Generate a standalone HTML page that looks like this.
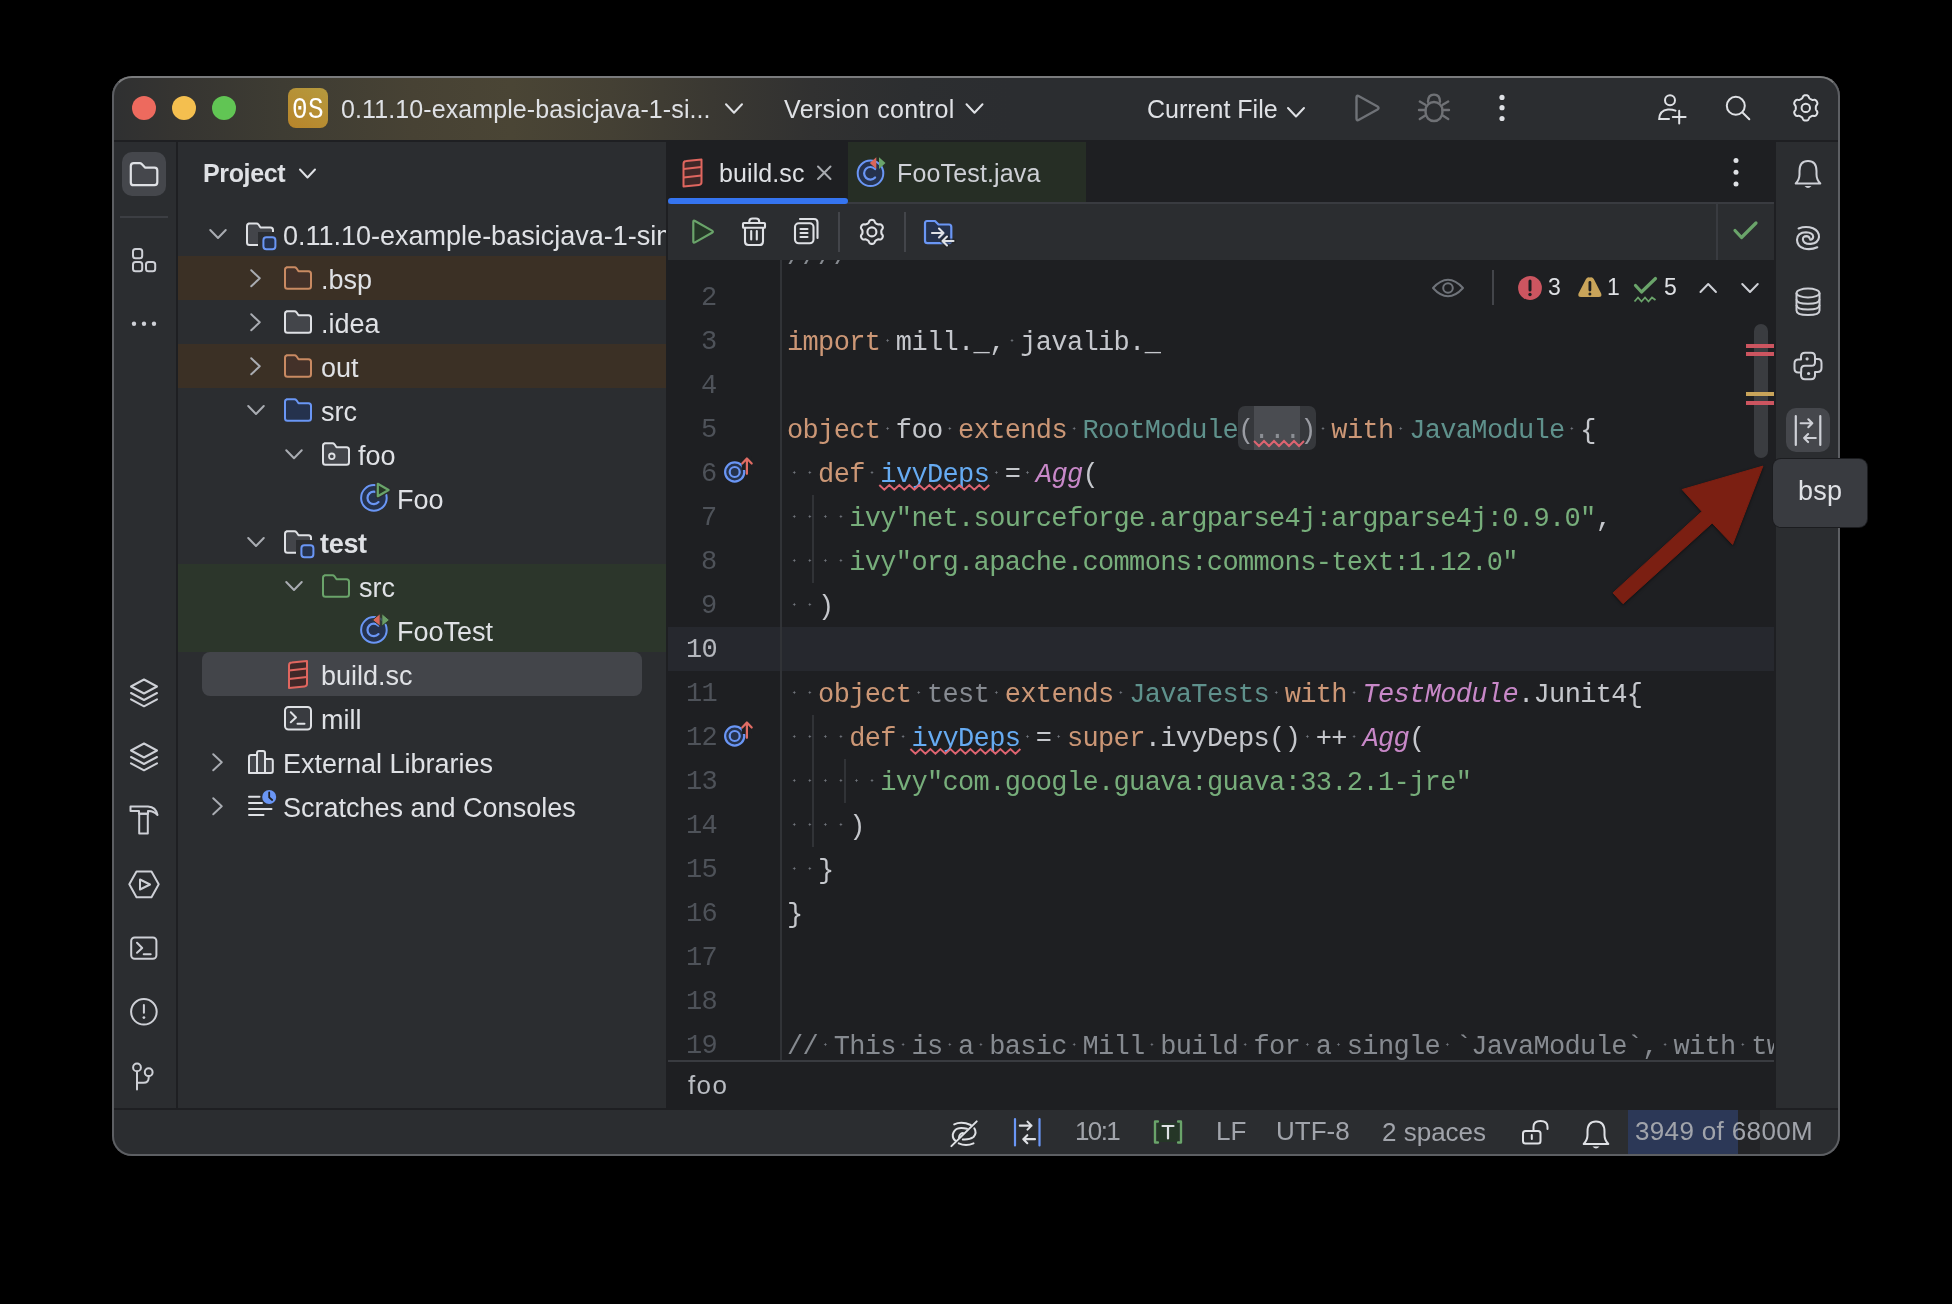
<!DOCTYPE html>
<html><head><meta charset="utf-8">
<style>
*{margin:0;padding:0;box-sizing:border-box}
html,body{width:1952px;height:1304px;background:#000;overflow:hidden}
body{position:relative;font-family:"Liberation Sans",sans-serif}
.a{position:absolute}
.t{position:absolute;white-space:pre;line-height:1;will-change:transform}
svg.ov{position:absolute;left:0;top:0;overflow:visible}
#win{position:absolute;left:112px;top:76px;width:1728px;height:1080px;border-radius:20px;background:#2b2d30;overflow:hidden}
#wb{position:absolute;left:112px;top:76px;width:1728px;height:1080px;border-radius:20px;border:2px solid #5d5f63;border-top-color:#7a7b7d;pointer-events:none}
</style></head><body>
<div id="win">
<div class="a" style="left:0;top:0;width:1728px;height:64px;background:linear-gradient(90deg,#2f3031 0px,#353431 60px,#3e3c33 170px,#474234 300px,#4a4535 400px,#444034 500px,#3a3832 600px,#313131 700px,#2c2e30 800px,#2b2d30 900px)"></div>
<div class="a" style="left:0px;top:64px;width:1728px;height:2px;background:#1e1f22"></div>
<div class="a" style="left:64px;top:66px;width:2px;height:966px;background:#1e1f22"></div>
<div class="a" style="left:554px;top:66px;width:2px;height:966px;background:#1e1f22"></div>
<div class="a" style="left:556px;top:66px;width:1106px;height:966px;background:#1e1f22"></div>
<div class="a" style="left:1662px;top:66px;width:2px;height:966px;background:#1e1f22"></div>
<div class="a" style="left:0px;top:1032px;width:1728px;height:2px;background:#1e1f22"></div>
</div>
<div class="a" style="left:288px;top:88px;width:40px;height:40px;border-radius:8px;background:linear-gradient(30deg,#b8842a,#b59a3e)"></div>
<div class="t" style="left:291.50px;top:98.24px;font-size:26px;color:#ffffff;font-family:'Liberation Mono',monospace;transform:scaleY(1.12);transform-origin:0 19.76px;letter-spacing:0.5px">0S</div>
<div class="t" style="left:341.00px;top:96.75px;font-size:25px;color:#dfe1e5;font-family:'Liberation Sans',sans-serif;letter-spacing:0.1px">0.11.10-example-basicjava-1-si...</div>
<div class="t" style="left:784.00px;top:96.75px;font-size:25px;color:#dfe1e5;font-family:'Liberation Sans',sans-serif;letter-spacing:0.35px">Version control</div>
<div class="t" style="left:1146.50px;top:96.75px;font-size:25px;color:#dfe1e5;font-family:'Liberation Sans',sans-serif">Current File</div>
<div class="a" style="left:122px;top:152px;width:44px;height:44px;background:#45474c;border-radius:10px"></div>
<div class="a" style="left:120px;top:216px;width:48px;height:2px;background:#3c3e43"></div>
<div class="t" style="left:202.50px;top:160.75px;font-size:25px;color:#dfe1e5;font-family:'Liberation Sans',sans-serif;font-weight:700;letter-spacing:-0.35px">Project</div>
<div class="a" style="left:178px;top:256px;width:488px;height:44px;background:#3b3025"></div>
<div class="a" style="left:178px;top:344px;width:488px;height:44px;background:#3b3025"></div>
<div class="a" style="left:178px;top:564px;width:488px;height:88px;background:#2c362b"></div>
<div class="a" style="left:202px;top:652px;width:440px;height:44px;background:#43454a;border-radius:8px"></div>
<div class="a" style="left:0;top:0;width:666px;height:1304px;overflow:hidden">
<div class="t" style="left:282.50px;top:222.55px;font-size:27px;color:#dfe1e5;font-family:'Liberation Sans',sans-serif">0.11.10-example-basicjava-1-simple</div>
<div class="t" style="left:320.50px;top:266.55px;font-size:27px;color:#dfe1e5;font-family:'Liberation Sans',sans-serif">.bsp</div>
<div class="t" style="left:320.50px;top:310.55px;font-size:27px;color:#dfe1e5;font-family:'Liberation Sans',sans-serif">.idea</div>
<div class="t" style="left:320.50px;top:354.55px;font-size:27px;color:#dfe1e5;font-family:'Liberation Sans',sans-serif">out</div>
<div class="t" style="left:320.50px;top:398.55px;font-size:27px;color:#dfe1e5;font-family:'Liberation Sans',sans-serif">src</div>
<div class="t" style="left:358.00px;top:442.55px;font-size:27px;color:#dfe1e5;font-family:'Liberation Sans',sans-serif">foo</div>
<div class="t" style="left:396.50px;top:486.55px;font-size:27px;color:#dfe1e5;font-family:'Liberation Sans',sans-serif">Foo</div>
<div class="t" style="left:320.00px;top:530.55px;font-size:27px;color:#dfe1e5;font-family:'Liberation Sans',sans-serif;font-weight:700;letter-spacing:-0.3px">test</div>
<div class="t" style="left:358.50px;top:574.55px;font-size:27px;color:#dfe1e5;font-family:'Liberation Sans',sans-serif">src</div>
<div class="t" style="left:396.50px;top:618.55px;font-size:27px;color:#dfe1e5;font-family:'Liberation Sans',sans-serif">FooTest</div>
<div class="t" style="left:320.50px;top:662.55px;font-size:27px;color:#dfe1e5;font-family:'Liberation Sans',sans-serif">build.sc</div>
<div class="t" style="left:320.50px;top:706.55px;font-size:27px;color:#dfe1e5;font-family:'Liberation Sans',sans-serif">mill</div>
<div class="t" style="left:282.50px;top:750.55px;font-size:27px;color:#dfe1e5;font-family:'Liberation Sans',sans-serif">External Libraries</div>
<div class="t" style="left:282.50px;top:794.55px;font-size:27px;color:#dfe1e5;font-family:'Liberation Sans',sans-serif">Scratches and Consoles</div>
</div>
<div class="a" style="left:848px;top:142px;width:238px;height:60px;background:#262e25"></div>
<div class="a" style="left:668px;top:202px;width:1106px;height:2px;background:#393b40"></div>
<div class="a" style="left:668px;top:204px;width:1106px;height:56px;background:#2b2d30"></div>
<div class="a" style="left:668px;top:198px;width:180px;height:6px;border-radius:3px;background:#3574f0"></div>
<div class="t" style="left:719.00px;top:160.55px;font-size:25px;color:#dfe1e5;font-family:'Liberation Sans',sans-serif;letter-spacing:0.1px">build.sc</div>
<div class="t" style="left:896.50px;top:160.55px;font-size:25px;color:#ced0d6;font-family:'Liberation Sans',sans-serif;letter-spacing:0.15px">FooTest.java</div>
<div class="a" style="left:838px;top:212px;width:2px;height:40px;background:#43454a"></div>
<div class="a" style="left:904px;top:212px;width:2px;height:40px;background:#43454a"></div>
<div class="a" style="left:1716px;top:204px;width:2px;height:56px;background:#393b40"></div>
<div class="a" style="left:668px;top:627px;width:1106px;height:44px;background:#26282e"></div>
<div class="a" style="left:780px;top:260px;width:2px;height:801px;background:#313337"></div>
<div class="a" style="left:812px;top:495px;width:2px;height:88px;background:#313337"></div>
<div class="a" style="left:812px;top:715px;width:2px;height:132px;background:#313337"></div>
<div class="a" style="left:844px;top:759px;width:2px;height:44px;background:#313337"></div>
<div class="a" style="left:668px;top:1060px;width:1106px;height:2px;background:#393b40"></div>
<div class="a" style="left:1238px;top:406px;width:78px;height:44px;background:#36383c;border-radius:7px"></div>
<div class="a" style="left:1254px;top:406px;width:46px;height:44px;background:#4a4c51"></div>
<div class="a" style="left:668px;top:260px;width:1106px;height:800px;overflow:hidden">
<div class="t" style="left:118.50px;top:-15.52px;font-family:'Liberation Mono',monospace;font-size:27px;letter-spacing:-0.652px"><span style="color:#868a90">////</span></div>
<div class="t" style="left:118.50px;top:69.98px;font-family:'Liberation Mono',monospace;font-size:27px;letter-spacing:-0.652px"><span style="color:#cc9776">import</span><span style="color:#c5c7cc"> mill._, javalib._</span></div>
<div class="t" style="left:118.50px;top:157.98px;font-family:'Liberation Mono',monospace;font-size:27px;letter-spacing:-0.652px"><span style="color:#cc9776">object</span><span style="color:#c5c7cc"> foo </span><span style="color:#cc9776">extends</span><span style="color:#c5c7cc"> </span><span style="color:#5f918c">RootModule</span><span style="color:#9a9ca3">(</span><span style="color:#8c8f95">...</span><span style="color:#9a9ca3">)</span><span style="color:#c5c7cc"> </span><span style="color:#cc9776">with</span><span style="color:#c5c7cc"> </span><span style="color:#5f918c">JavaModule</span><span style="color:#c5c7cc"> {</span></div>
<div class="t" style="left:118.50px;top:201.98px;font-family:'Liberation Mono',monospace;font-size:27px;letter-spacing:-0.652px"><span style="color:#c5c7cc">  </span><span style="color:#cc9776">def</span><span style="color:#c5c7cc"> </span><span style="color:#66abf2">ivyDeps</span><span style="color:#c5c7cc"> = </span><span style="color:#c888c8;font-style:italic">Agg</span><span style="color:#c5c7cc">(</span></div>
<div class="t" style="left:118.50px;top:245.98px;font-family:'Liberation Mono',monospace;font-size:27px;letter-spacing:-0.652px"><span style="color:#c5c7cc">    </span><span style="color:#77ae7b">ivy&quot;net.sourceforge.argparse4j:argparse4j:0.9.0&quot;</span><span style="color:#c5c7cc">,</span></div>
<div class="t" style="left:118.50px;top:289.98px;font-family:'Liberation Mono',monospace;font-size:27px;letter-spacing:-0.652px"><span style="color:#c5c7cc">    </span><span style="color:#77ae7b">ivy&quot;org.apache.commons:commons-text:1.12.0&quot;</span></div>
<div class="t" style="left:118.50px;top:333.98px;font-family:'Liberation Mono',monospace;font-size:27px;letter-spacing:-0.652px"><span style="color:#c5c7cc">  )</span></div>
<div class="t" style="left:118.50px;top:421.98px;font-family:'Liberation Mono',monospace;font-size:27px;letter-spacing:-0.652px"><span style="color:#c5c7cc">  </span><span style="color:#cc9776">object</span><span style="color:#c5c7cc"> </span><span style="color:#868a91">test</span><span style="color:#c5c7cc"> </span><span style="color:#cc9776">extends</span><span style="color:#c5c7cc"> </span><span style="color:#5f918c">JavaTests</span><span style="color:#c5c7cc"> </span><span style="color:#cc9776">with</span><span style="color:#c5c7cc"> </span><span style="color:#c888c8;font-style:italic">TestModule</span><span style="color:#c5c7cc">.Junit4{</span></div>
<div class="t" style="left:118.50px;top:465.98px;font-family:'Liberation Mono',monospace;font-size:27px;letter-spacing:-0.652px"><span style="color:#c5c7cc">    </span><span style="color:#cc9776">def</span><span style="color:#c5c7cc"> </span><span style="color:#66abf2">ivyDeps</span><span style="color:#c5c7cc"> = </span><span style="color:#cc9776">super</span><span style="color:#c5c7cc">.ivyDeps() ++ </span><span style="color:#c888c8;font-style:italic">Agg</span><span style="color:#c5c7cc">(</span></div>
<div class="t" style="left:118.50px;top:509.98px;font-family:'Liberation Mono',monospace;font-size:27px;letter-spacing:-0.652px"><span style="color:#c5c7cc">      </span><span style="color:#77ae7b">ivy&quot;com.google.guava:guava:33.2.1-jre&quot;</span></div>
<div class="t" style="left:118.50px;top:553.98px;font-family:'Liberation Mono',monospace;font-size:27px;letter-spacing:-0.652px"><span style="color:#c5c7cc">    )</span></div>
<div class="t" style="left:118.50px;top:597.98px;font-family:'Liberation Mono',monospace;font-size:27px;letter-spacing:-0.652px"><span style="color:#c5c7cc">  }</span></div>
<div class="t" style="left:118.50px;top:641.98px;font-family:'Liberation Mono',monospace;font-size:27px;letter-spacing:-0.652px"><span style="color:#c5c7cc">}</span></div>
<div class="t" style="left:118.50px;top:773.98px;font-family:'Liberation Mono',monospace;font-size:27px;letter-spacing:-0.652px"><span style="color:#868a90">// This is a basic Mill build for a single `JavaModule`, with two test modules</span></div>
</div>
<div class="t" style="left:701.45px;top:285.48px;font-size:27px;color:#4e5259;font-family:'Liberation Mono',monospace;letter-spacing:-0.652429999999999px">2</div>
<div class="t" style="left:701.45px;top:329.48px;font-size:27px;color:#4e5259;font-family:'Liberation Mono',monospace;letter-spacing:-0.652429999999999px">3</div>
<div class="t" style="left:701.45px;top:373.48px;font-size:27px;color:#4e5259;font-family:'Liberation Mono',monospace;letter-spacing:-0.652429999999999px">4</div>
<div class="t" style="left:701.45px;top:417.48px;font-size:27px;color:#4e5259;font-family:'Liberation Mono',monospace;letter-spacing:-0.652429999999999px">5</div>
<div class="t" style="left:701.45px;top:461.48px;font-size:27px;color:#4e5259;font-family:'Liberation Mono',monospace;letter-spacing:-0.652429999999999px">6</div>
<div class="t" style="left:701.45px;top:505.48px;font-size:27px;color:#4e5259;font-family:'Liberation Mono',monospace;letter-spacing:-0.652429999999999px">7</div>
<div class="t" style="left:701.45px;top:549.48px;font-size:27px;color:#4e5259;font-family:'Liberation Mono',monospace;letter-spacing:-0.652429999999999px">8</div>
<div class="t" style="left:701.45px;top:593.48px;font-size:27px;color:#4e5259;font-family:'Liberation Mono',monospace;letter-spacing:-0.652429999999999px">9</div>
<div class="t" style="left:685.90px;top:637.48px;font-size:27px;color:#b4b7bd;font-family:'Liberation Mono',monospace;letter-spacing:-0.652429999999999px">10</div>
<div class="t" style="left:685.90px;top:681.48px;font-size:27px;color:#4e5259;font-family:'Liberation Mono',monospace;letter-spacing:-0.652429999999999px">11</div>
<div class="t" style="left:685.90px;top:725.48px;font-size:27px;color:#4e5259;font-family:'Liberation Mono',monospace;letter-spacing:-0.652429999999999px">12</div>
<div class="t" style="left:685.90px;top:769.48px;font-size:27px;color:#4e5259;font-family:'Liberation Mono',monospace;letter-spacing:-0.652429999999999px">13</div>
<div class="t" style="left:685.90px;top:813.48px;font-size:27px;color:#4e5259;font-family:'Liberation Mono',monospace;letter-spacing:-0.652429999999999px">14</div>
<div class="t" style="left:685.90px;top:857.48px;font-size:27px;color:#4e5259;font-family:'Liberation Mono',monospace;letter-spacing:-0.652429999999999px">15</div>
<div class="t" style="left:685.90px;top:901.48px;font-size:27px;color:#4e5259;font-family:'Liberation Mono',monospace;letter-spacing:-0.652429999999999px">16</div>
<div class="t" style="left:685.90px;top:945.48px;font-size:27px;color:#4e5259;font-family:'Liberation Mono',monospace;letter-spacing:-0.652429999999999px">17</div>
<div class="t" style="left:685.90px;top:989.48px;font-size:27px;color:#4e5259;font-family:'Liberation Mono',monospace;letter-spacing:-0.652429999999999px">18</div>
<div class="t" style="left:685.90px;top:1033.48px;font-size:27px;color:#4e5259;font-family:'Liberation Mono',monospace;letter-spacing:-0.652429999999999px">19</div>
<div class="a" style="left:1492px;top:270px;width:2px;height:35px;background:#43454a"></div>
<div class="t" style="left:1548.00px;top:276.25px;font-size:23px;color:#dfe1e5;font-family:'Liberation Sans',sans-serif">3</div>
<div class="t" style="left:1607.00px;top:276.25px;font-size:23px;color:#dfe1e5;font-family:'Liberation Sans',sans-serif">1</div>
<div class="t" style="left:1664.00px;top:276.25px;font-size:23px;color:#dfe1e5;font-family:'Liberation Sans',sans-serif">5</div>
<div class="a" style="left:1754px;top:324px;width:14px;height:134px;background:#3a3c40;border-radius:7px"></div>
<div class="a" style="left:1746px;top:344px;width:28px;height:4px;background:#cc5560"></div>
<div class="a" style="left:1746px;top:352px;width:28px;height:4px;background:#cc5560"></div>
<div class="a" style="left:1746px;top:392px;width:28px;height:4px;background:#c9a45a"></div>
<div class="a" style="left:1746px;top:401px;width:28px;height:4px;background:#cc5560"></div>
<div class="t" style="left:687.50px;top:1072.10px;font-size:26px;color:#b9bcc2;font-family:'Liberation Sans',sans-serif;letter-spacing:1.4px">foo</div>
<div class="a" style="left:1786px;top:408px;width:44px;height:44px;background:#45474c;border-radius:10px"></div>
<div class="t" style="left:1075.00px;top:1118.20px;font-size:26px;color:#a1a4ab;font-family:'Liberation Sans',sans-serif;letter-spacing:-1.6px">10:1</div>
<div class="a" style="left:1157px;top:1122.5px;width:22px;height:19px;background:#253627"></div>
<div class="t" style="left:1215.50px;top:1118.20px;font-size:26px;color:#a1a4ab;font-family:'Liberation Sans',sans-serif">LF</div>
<div class="t" style="left:1275.50px;top:1118.20px;font-size:26px;color:#a1a4ab;font-family:'Liberation Sans',sans-serif">UTF-8</div>
<div class="t" style="left:1382.00px;top:1119.10px;font-size:26px;color:#a1a4ab;font-family:'Liberation Sans',sans-serif">2 spaces</div>
<div class="a" style="left:1628px;top:1110px;width:110px;height:45px;background:#2c3857"></div>
<div class="a" style="left:1738px;top:1110px;width:22px;height:45px;background:#232427"></div>
<div class="t" style="left:1634.50px;top:1118.40px;font-size:26px;color:#a1a4ab;font-family:'Liberation Sans',sans-serif;letter-spacing:0.35px">3949 of 6800M</div>
<div id="wb"></div>
<svg class="ov" width="1952" height="1304" viewBox="0 0 1952 1304"><circle cx="144" cy="108" r="12" fill="#ed6a5e"/><circle cx="184" cy="108" r="12" fill="#f4bf4f"/><circle cx="224" cy="108" r="12" fill="#61c554"/><path d="M726.0,104.25 L734,112.75 L742.0,104.25" fill="none" stroke="#dfe1e5" stroke-width="2" stroke-linecap="round" stroke-linejoin="round"/><path d="M966.5,104.25 L974.5,112.75 L982.5,104.25" fill="none" stroke="#dfe1e5" stroke-width="2" stroke-linecap="round" stroke-linejoin="round"/><path d="M1288.0,108.05 L1296,116.55 L1304.0,108.05" fill="none" stroke="#dfe1e5" stroke-width="2" stroke-linecap="round" stroke-linejoin="round"/><path d="M1356.5,97.5 Q1356.5,94.8 1359,96.2 L1377.5,106.5 Q1379.6,108 1377.5,109.5 L1359,119.8 Q1356.5,121.2 1356.5,118.5 Z" fill="none" stroke="#6f7277" stroke-width="2.4" stroke-linejoin="round"/><g fill="none" stroke="#6f7175" stroke-width="2.4" stroke-linecap="round" transform="translate(-1,0)"><path d="M1429,101.8 Q1429,94.6 1435,94.6 Q1441,94.6 1441,101.8"/><rect x="1426.6" y="102" width="16.8" height="19" rx="8.4"/><path d="M1420.8,101.5 L1426.3,104.8 M1449.2,101.5 L1443.7,104.8 M1420,110 H1426.3 M1450,110 H1443.7 M1420.8,119 L1426.3,115.6 M1449.2,119 L1443.7,115.6"/></g><circle cx="1502" cy="97.4" r="2.6" fill="#dfe1e5"/><circle cx="1502" cy="107.7" r="2.6" fill="#dfe1e5"/><circle cx="1502" cy="118.5" r="2.6" fill="#dfe1e5"/><g fill="none" stroke="#dfe1e5" stroke-width="2" stroke-linecap="round"><circle cx="1670" cy="100.2" r="5"/><path d="M1675.5,110.6 Q1672,109.3 1668,109.5 Q1659.5,110.5 1659.2,119 H1669"/><path d="M1672.8,117 H1685.6 M1679.2,110.7 V123.5"/></g><g fill="none" stroke="#dfe1e5" stroke-width="2" stroke-linecap="round"><circle cx="1735.8" cy="105.8" r="9"/><path d="M1742.5,112.5 L1749.3,119.3"/></g><path d="M1815.80,107.90 L1815.80,108.34 L1815.82,108.78 L1815.87,109.23 L1816.02,109.70 L1816.32,110.23 L1816.76,110.84 L1817.17,111.49 L1817.38,112.11 L1817.38,112.70 L1817.26,113.24 L1817.05,113.76 L1816.80,114.25 L1816.50,114.72 L1816.16,115.15 L1815.75,115.53 L1815.24,115.82 L1814.59,115.96 L1813.83,115.93 L1813.08,115.84 L1812.47,115.85 L1811.99,115.96 L1811.57,116.14 L1811.18,116.34 L1810.80,116.56 L1810.42,116.78 L1810.05,117.02 L1809.69,117.29 L1809.35,117.65 L1809.04,118.18 L1808.74,118.86 L1808.38,119.54 L1807.94,120.04 L1807.44,120.33 L1806.90,120.49 L1806.35,120.58 L1805.80,120.60 L1805.25,120.58 L1804.70,120.49 L1804.16,120.33 L1803.66,120.04 L1803.22,119.54 L1802.86,118.86 L1802.56,118.18 L1802.25,117.65 L1801.91,117.29 L1801.55,117.02 L1801.18,116.78 L1800.80,116.56 L1800.42,116.34 L1800.03,116.14 L1799.61,115.96 L1799.13,115.85 L1798.52,115.84 L1797.77,115.93 L1797.01,115.96 L1796.36,115.82 L1795.85,115.53 L1795.44,115.15 L1795.10,114.72 L1794.80,114.25 L1794.55,113.76 L1794.34,113.24 L1794.22,112.70 L1794.22,112.11 L1794.43,111.49 L1794.84,110.84 L1795.28,110.23 L1795.58,109.70 L1795.73,109.23 L1795.78,108.78 L1795.80,108.34 L1795.80,107.90 L1795.80,107.46 L1795.78,107.02 L1795.73,106.57 L1795.58,106.10 L1795.28,105.57 L1794.84,104.96 L1794.43,104.31 L1794.22,103.69 L1794.22,103.10 L1794.34,102.56 L1794.55,102.04 L1794.80,101.55 L1795.10,101.08 L1795.44,100.65 L1795.85,100.27 L1796.36,99.98 L1797.01,99.84 L1797.77,99.87 L1798.52,99.96 L1799.13,99.95 L1799.61,99.84 L1800.03,99.66 L1800.42,99.46 L1800.80,99.24 L1801.18,99.02 L1801.55,98.78 L1801.91,98.51 L1802.25,98.15 L1802.56,97.62 L1802.86,96.94 L1803.22,96.26 L1803.66,95.76 L1804.16,95.47 L1804.70,95.31 L1805.25,95.22 L1805.80,95.20 L1806.35,95.22 L1806.90,95.31 L1807.44,95.47 L1807.94,95.76 L1808.38,96.26 L1808.74,96.94 L1809.04,97.62 L1809.35,98.15 L1809.69,98.51 L1810.05,98.78 L1810.42,99.02 L1810.80,99.24 L1811.18,99.46 L1811.57,99.66 L1811.99,99.84 L1812.47,99.95 L1813.08,99.96 L1813.83,99.87 L1814.59,99.84 L1815.24,99.98 L1815.75,100.27 L1816.16,100.65 L1816.50,101.08 L1816.80,101.55 L1817.05,102.04 L1817.26,102.56 L1817.38,103.10 L1817.38,103.69 L1817.17,104.31 L1816.76,104.96 L1816.32,105.57 L1816.02,106.10 L1815.87,106.57 L1815.82,107.02 L1815.80,107.46 Z" fill="none" stroke="#dfe1e5" stroke-width="2" stroke-linejoin="round"/><circle cx="1805.8" cy="107.9" r="4.2" fill="none" stroke="#dfe1e5" stroke-width="2"/><path d="M133.8,163.2 H139.8 Q140.9,163.2 141.7,164 L145,167.6 H154.5 Q157.3,167.6 157.3,170.4 V182.3 Q157.3,185.2 154.5,185.2 H133.6 Q130.8,185.2 130.8,182.4 V166.2 Q130.8,163.2 133.8,163.2 Z" fill="none" stroke="#dfe1e5" stroke-width="2.2" stroke-linejoin="round"/><g fill="none" stroke="#ced0d6" stroke-width="2"><rect x="133" y="249" width="9.2" height="9.2" rx="2.5"/><rect x="133" y="262" width="9.2" height="9.2" rx="2.5"/><rect x="146" y="262" width="9.2" height="9.2" rx="2.5"/></g><circle cx="134" cy="323.7" r="2.2" fill="#ced0d6"/><circle cx="144" cy="323.7" r="2.2" fill="#ced0d6"/><circle cx="154" cy="323.7" r="2.2" fill="#ced0d6"/><g fill="none" stroke="#ced0d6" stroke-width="2" stroke-linejoin="round" stroke-linecap="round"><path d="M144,679.5 L157,686.5 L144,693.5 L131,686.5 Z"/><path d="M131,693.0 L144,700.0 L157,693.0"/><path d="M131,699.3 L144,706.3 L157,699.3"/></g><g fill="none" stroke="#ced0d6" stroke-width="2" stroke-linejoin="round" stroke-linecap="round"><path d="M144,743.5 L157,750.5 L144,757.5 L131,750.5 Z"/><path d="M131,757.0 L144,764.0 L157,757.0"/><path d="M131,763.3 L144,770.3 L157,763.3"/></g><g fill="none" stroke="#ced0d6" stroke-width="2" stroke-linejoin="round"><path d="M130.5,806.5 H148 Q156,807 157.5,815 Q153,810.5 148,811 V813.8 H139 V811 H130.5 Z"/><path d="M139.2,813.8 H147.8 V833.5 H139.2 Z"/></g><g fill="none" stroke="#ced0d6" stroke-width="2" stroke-linejoin="round"><path d="M129.3,884.3 L136.5,871.5 H151.5 L158.7,884.3 L151.5,897.2 H136.5 Z"/><path d="M140,879.5 L150,884.5 L140,889.5 Z"/></g><g fill="none" stroke="#ced0d6" stroke-width="2" stroke-linecap="round" stroke-linejoin="round"><rect x="131.2" y="937.5" width="25.2" height="21.2" rx="3.5" fill="none"/><path d="M137.0,942.8 L142.2,948.0 L137.0,952.8"/><path d="M143.7,954.3 H150.7"/></g><g fill="none" stroke="#ced0d6" stroke-width="2" stroke-linecap="round"><circle cx="143.9" cy="1011.8" r="12.8"/><path d="M143.9,1005 V1012.8"/></g><circle cx="143.9" cy="1017.6" r="1.4" fill="#ced0d6"/><g fill="none" stroke="#ced0d6" stroke-width="2" stroke-linecap="round"><circle cx="137" cy="1067.4" r="3.9"/><circle cx="148.7" cy="1072.2" r="3.9"/><path d="M137,1071.5 V1089.5 M137,1082.8 H143.5 Q148.7,1082.8 148.7,1077.5 V1076.2"/></g><path d="M300.0,169.5 L307.5,177.5 L315.0,169.5" fill="none" stroke="#dfe1e5" stroke-width="2" stroke-linecap="round" stroke-linejoin="round"/><path d="M210.25,230.0 L218,238.0 L225.75,230.0" fill="none" stroke="#a9acb2" stroke-width="2" stroke-linecap="round" stroke-linejoin="round"/><path d="M248.6,223.5 H256.5 Q257.7,223.5 258.5,224.5 L260.5,227.5 H270.5 Q273,227.5 273,230.0 V242.5 Q273,245.0 270.5,245.0 H249.5 Q247,245.0 247,242.5 V226.0 Q247,223.5 249.5,223.5 Z" fill="#43454a" stroke="#dfe1e5" stroke-width="2" stroke-linejoin="round"/><rect x="258" y="232" width="20" height="20" fill="#2b2d30"/><rect x="263.4" y="237.2" width="12" height="12" rx="3" fill="#25324d" stroke="#6a96f5" stroke-width="2"/><path d="M251.25,270.3 L259.75,278.3 L251.25,286.3" fill="none" stroke="#a9acb2" stroke-width="2" stroke-linecap="round" stroke-linejoin="round"/><path d="M286.6,267.3 H294.5 Q295.7,267.3 296.5,268.3 L298.5,271.3 H308.5 Q311,271.3 311,273.8 V286.3 Q311,288.8 308.5,288.8 H287.5 Q285,288.8 285,286.3 V269.8 Q285,267.3 287.5,267.3 Z" fill="#433129" stroke="#c98a62" stroke-width="2" stroke-linejoin="round"/><path d="M251.25,314.3 L259.75,322.3 L251.25,330.3" fill="none" stroke="#a9acb2" stroke-width="2" stroke-linecap="round" stroke-linejoin="round"/><path d="M286.6,311.3 H294.5 Q295.7,311.3 296.5,312.3 L298.5,315.3 H308.5 Q311,315.3 311,317.8 V330.3 Q311,332.8 308.5,332.8 H287.5 Q285,332.8 285,330.3 V313.8 Q285,311.3 287.5,311.3 Z" fill="#43454a" stroke="#dfe1e5" stroke-width="2" stroke-linejoin="round"/><path d="M251.25,358.3 L259.75,366.3 L251.25,374.3" fill="none" stroke="#a9acb2" stroke-width="2" stroke-linecap="round" stroke-linejoin="round"/><path d="M286.6,355.3 H294.5 Q295.7,355.3 296.5,356.3 L298.5,359.3 H308.5 Q311,359.3 311,361.8 V374.3 Q311,376.8 308.5,376.8 H287.5 Q285,376.8 285,374.3 V357.8 Q285,355.3 287.5,355.3 Z" fill="#433129" stroke="#c98a62" stroke-width="2" stroke-linejoin="round"/><path d="M248.25,406.0 L256,414.0 L263.75,406.0" fill="none" stroke="#a9acb2" stroke-width="2" stroke-linecap="round" stroke-linejoin="round"/><path d="M286.6,399.3 H294.5 Q295.7,399.3 296.5,400.3 L298.5,403.3 H308.5 Q311,403.3 311,405.8 V418.3 Q311,420.8 308.5,420.8 H287.5 Q285,420.8 285,418.3 V401.8 Q285,399.3 287.5,399.3 Z" fill="#25324d" stroke="#6a96f5" stroke-width="2" stroke-linejoin="round"/><path d="M286.25,450.2 L294,458.2 L301.75,450.2" fill="none" stroke="#a9acb2" stroke-width="2" stroke-linecap="round" stroke-linejoin="round"/><path d="M324.6,443.3 H332.5 Q333.7,443.3 334.5,444.3 L336.5,447.3 H346.5 Q349,447.3 349,449.8 V462.3 Q349,464.8 346.5,464.8 H325.5 Q323,464.8 323,462.3 V445.8 Q323,443.3 325.5,443.3 Z" fill="#43454a" stroke="#dfe1e5" stroke-width="2" stroke-linejoin="round"/><circle cx="331.8" cy="456.3" r="2.8" fill="none" stroke="#dfe1e5" stroke-width="1.8"/><circle cx="373.9" cy="497.9" r="12.8" fill="#25324d" stroke="#6a96f5" stroke-width="2"/><path d="M378.5,493.7 A6.3,6.3 0 1 0 378.5,502.09999999999997" fill="none" stroke="#6a96f5" stroke-width="2.2" stroke-linecap="round"/><path d="M377.8,483.8 L388.6,490 L377.8,496.2 Z" fill="#263626" stroke="#2b2d30" stroke-width="5" stroke-linejoin="round"/><path d="M377.8,483.8 L388.6,490 L377.8,496.2 Z" fill="#263626" stroke="#6aa46a" stroke-width="2.2" stroke-linejoin="round"/><path d="M248.25,538.0 L256,546.0 L263.75,538.0" fill="none" stroke="#a9acb2" stroke-width="2" stroke-linecap="round" stroke-linejoin="round"/><path d="M286.6,531.3 H294.5 Q295.7,531.3 296.5,532.3 L298.5,535.3 H308.5 Q311,535.3 311,537.8 V550.3 Q311,552.8 308.5,552.8 H287.5 Q285,552.8 285,550.3 V533.8 Q285,531.3 287.5,531.3 Z" fill="#43454a" stroke="#dfe1e5" stroke-width="2" stroke-linejoin="round"/><rect x="296" y="540" width="20" height="20" fill="#2b2d30"/><rect x="301.4" y="545.2" width="12" height="12" rx="3" fill="#25324d" stroke="#6a96f5" stroke-width="2"/><path d="M286.25,582.0 L294,590.0 L301.75,582.0" fill="none" stroke="#a9acb2" stroke-width="2" stroke-linecap="round" stroke-linejoin="round"/><path d="M324.6,575.3 H332.5 Q333.7,575.3 334.5,576.3 L336.5,579.3 H346.5 Q349,579.3 349,581.8 V594.3 Q349,596.8 346.5,596.8 H325.5 Q323,596.8 323,594.3 V577.8 Q323,575.3 325.5,575.3 Z" fill="none" stroke="#6aa46a" stroke-width="2" stroke-linejoin="round"/><circle cx="373.9" cy="629.9" r="12.8" fill="#25324d" stroke="#6a96f5" stroke-width="2"/><path d="M378.5,625.6999999999999 A6.3,6.3 0 1 0 378.5,634.1" fill="none" stroke="#6a96f5" stroke-width="2.2" stroke-linecap="round"/><path d="M372.5,620 L380.2,613.5 V626.2 Z" fill="#d9665b" stroke="#2c362b" stroke-width="1"/><path d="M381.8,613.5 L389.5,620 L381.8,626.2 Z" fill="#6a9d66" stroke="#2c362b" stroke-width="1"/><g stroke="#e0665f" stroke-width="2" fill="#3f2828" stroke-linejoin="round"><path d="M289,665.5 Q289,662.8 291.8,662.6 L307,661 V683.8 Q307,686.2 304.4,686.5 L289,688 Z"/><path d="M289,670.6 L307,668.6 M289,679 L307,677" fill="none"/></g><g fill="none" stroke="#dfe1e5" stroke-width="2" stroke-linecap="round" stroke-linejoin="round"><rect x="285" y="707" width="26" height="22.5" rx="3.5" fill="#393b40"/><path d="M290.8,712.3 L296,717.5 L290.8,722.3"/><path d="M297.5,723.8 H304.5"/></g><path d="M213.25,754.3 L221.75,762.3 L213.25,770.3" fill="none" stroke="#a9acb2" stroke-width="2" stroke-linecap="round" stroke-linejoin="round"/><g fill="#43454a" stroke="#dfe1e5" stroke-width="2" stroke-linejoin="round"><path d="M251,755 H257 V773 H249 V757 Q249,755 251,755 Z"/><path d="M259,751 H263 Q265,751 265,753 V773 H257 V753 Q257,751 259,751 Z"/><path d="M265,758.9 H271 Q272.8,758.9 272.8,760.9 V771 Q272.8,773 270.8,773 H265 Z"/></g><path d="M213.25,798.3 L221.75,806.3 L213.25,814.3" fill="none" stroke="#a9acb2" stroke-width="2" stroke-linecap="round" stroke-linejoin="round"/><g stroke="#dfe1e5" stroke-width="2" stroke-linecap="round"><path d="M249,796.8 H259.5 M249,802.9 H262 M249,808.9 H271.5 M249,815 H263.5"/></g><circle cx="269.2" cy="797" r="7" fill="#6a96f5"/><path d="M269.2,792.5 V797.3 L272.2,800" fill="none" stroke="#1e1f22" stroke-width="1.8" stroke-linecap="round"/><g stroke="#e0665f" stroke-width="2" fill="#3f2828" stroke-linejoin="round"><path d="M683.5,164.0 Q683.5,161.3 686.3,161.1 L701.5,159.5 V182.3 Q701.5,184.7 698.9,185.0 L683.5,186.5 Z"/><path d="M683.5,169.1 L701.5,167.1 M683.5,177.5 L701.5,175.5" fill="none"/></g><path d="M818,166.5 L830.5,179 M830.5,166.5 L818,179" stroke="#a8abb0" stroke-width="2" stroke-linecap="round"/><circle cx="870.5" cy="173.3" r="12.8" fill="#25324d" stroke="#6a96f5" stroke-width="2"/><path d="M875.1,169.10000000000002 A6.3,6.3 0 1 0 875.1,177.5" fill="none" stroke="#6a96f5" stroke-width="2.2" stroke-linecap="round"/><path d="M869.8,163 L876.3,157.3 V169 Z" fill="#d9665b"/><path d="M879,157.3 L885.5,163 L879,169 Z" fill="#6aa46a"/><circle cx="1736" cy="160.5" r="2.5" fill="#dfe1e5"/><circle cx="1736" cy="172.3" r="2.5" fill="#dfe1e5"/><circle cx="1736" cy="184" r="2.5" fill="#dfe1e5"/><path d="M693.3,222 Q693.3,220 695,221 L712,230.6 Q713.8,231.7 712,232.8 L695,242.4 Q693.3,243.4 693.3,241.4 Z" fill="#253627" stroke="#6aa46a" stroke-width="2.2" stroke-linejoin="round"/><g fill="none" stroke="#dfe1e5" stroke-width="2.1" stroke-linejoin="round" stroke-linecap="round"><path d="M749.3,223 V221.5 Q749.3,218.5 752.5,218.5 H756 Q759.2,218.5 759.2,221.5 V223"/><rect x="743" y="223" width="22" height="4.8" rx="0.8"/><path d="M745,228 V241.5 Q745,245 748.5,245 H759.5 Q763,245 763,241.5 V228"/><path d="M751.2,231 V239.5 M756.8,231 V239.5"/></g><g fill="none" stroke="#dfe1e5" stroke-width="2.1" stroke-linejoin="round" stroke-linecap="round"><rect x="795" y="223.3" width="18.5" height="20" rx="3.8"/><path d="M800,219 H814 Q817.5,219 817.5,222.5 V238"/><path d="M800.5,229 H807.5 M800.5,233 H807.5 M800.5,237 H807.5"/></g><path d="M881.30,231.90 L881.30,232.31 L881.32,232.72 L881.37,233.15 L881.52,233.60 L881.81,234.10 L882.24,234.67 L882.63,235.28 L882.83,235.88 L882.84,236.43 L882.73,236.95 L882.53,237.44 L882.29,237.90 L882.01,238.34 L881.68,238.75 L881.30,239.11 L880.81,239.38 L880.20,239.50 L879.47,239.47 L878.76,239.38 L878.18,239.38 L877.72,239.48 L877.32,239.65 L876.96,239.84 L876.60,240.04 L876.25,240.25 L875.90,240.47 L875.56,240.73 L875.24,241.07 L874.95,241.58 L874.67,242.24 L874.34,242.89 L873.92,243.36 L873.45,243.64 L872.94,243.80 L872.42,243.88 L871.90,243.90 L871.38,243.88 L870.86,243.80 L870.35,243.64 L869.88,243.36 L869.46,242.89 L869.13,242.24 L868.85,241.58 L868.56,241.07 L868.24,240.73 L867.90,240.47 L867.55,240.25 L867.20,240.04 L866.84,239.84 L866.48,239.65 L866.08,239.48 L865.62,239.38 L865.04,239.38 L864.33,239.47 L863.60,239.50 L862.99,239.38 L862.50,239.11 L862.12,238.75 L861.79,238.34 L861.51,237.90 L861.27,237.44 L861.07,236.95 L860.96,236.43 L860.97,235.88 L861.17,235.28 L861.56,234.67 L861.99,234.10 L862.28,233.60 L862.43,233.15 L862.48,232.72 L862.50,232.31 L862.50,231.90 L862.50,231.49 L862.48,231.08 L862.43,230.65 L862.28,230.20 L861.99,229.70 L861.56,229.13 L861.17,228.52 L860.97,227.92 L860.96,227.37 L861.07,226.85 L861.27,226.36 L861.51,225.90 L861.79,225.46 L862.12,225.05 L862.50,224.69 L862.99,224.42 L863.60,224.30 L864.33,224.33 L865.04,224.42 L865.62,224.42 L866.08,224.32 L866.48,224.15 L866.84,223.96 L867.20,223.76 L867.55,223.55 L867.90,223.33 L868.24,223.07 L868.56,222.73 L868.85,222.22 L869.13,221.56 L869.46,220.91 L869.88,220.44 L870.35,220.16 L870.86,220.00 L871.38,219.92 L871.90,219.90 L872.42,219.92 L872.94,220.00 L873.45,220.16 L873.92,220.44 L874.34,220.91 L874.67,221.56 L874.95,222.22 L875.24,222.73 L875.56,223.07 L875.90,223.33 L876.25,223.55 L876.60,223.76 L876.96,223.96 L877.32,224.15 L877.72,224.32 L878.18,224.42 L878.76,224.42 L879.47,224.33 L880.20,224.30 L880.81,224.42 L881.30,224.69 L881.68,225.05 L882.01,225.46 L882.29,225.90 L882.53,226.36 L882.73,226.85 L882.84,227.37 L882.83,227.92 L882.63,228.52 L882.24,229.13 L881.81,229.70 L881.52,230.20 L881.37,230.65 L881.32,231.08 L881.30,231.49 Z" fill="none" stroke="#dfe1e5" stroke-width="2.1" stroke-linejoin="round"/><circle cx="871.9" cy="231.9" r="4.5" fill="none" stroke="#dfe1e5" stroke-width="2.1"/><path d="M927,221 H935 L938.5,224.5 H949 Q951.3,224.5 951.3,227 V240.5 Q951.3,243.2 948.8,243.2 H927.5 Q925,243.2 925,240.7 V223.5 Q925,221 927,221 Z" fill="#25324d" stroke="#6a96f5" stroke-width="2.2" stroke-linejoin="round"/><g fill="none" stroke="#1e1f22" stroke-width="5" stroke-linecap="round" stroke-linejoin="round" opacity="0.6"><path d="M942.5,241 H953.5 M946.5,237 L942.5,241 L946.5,245"/></g><g fill="none" stroke="#dfe1e5" stroke-width="2.1" stroke-linecap="round" stroke-linejoin="round"><path d="M932,233 H943.5 M939,228.5 L943.5,233 L939,237.5"/><path d="M942.5,241 H953.5 M947,236.5 L942.5,241 L947,245.5"/></g><path d="M1735,230.5 L1741.5,237.5 L1756,223" fill="none" stroke="#6aa46a" stroke-width="3.2" stroke-linecap="round" stroke-linejoin="round"/><path d="M887.6,338.7 L888.2,339.9 L889.4,340.5 L888.2,341.1 L887.6,342.3 L887.0,341.1 L885.8,340.5 L887.0,339.9 Z" fill="#6f737a"/><path d="M1012.0,338.7 L1012.6,339.9 L1013.8,340.5 L1012.6,341.1 L1012.0,342.3 L1011.4,341.1 L1010.2,340.5 L1011.4,339.9 Z" fill="#6f737a"/><path d="M887.6,426.7 L888.2,427.9 L889.4,428.5 L888.2,429.1 L887.6,430.3 L887.0,429.1 L885.8,428.5 L887.0,427.9 Z" fill="#6f737a"/><path d="M949.8,426.7 L950.4,427.9 L951.6,428.5 L950.4,429.1 L949.8,430.3 L949.2,429.1 L948.0,428.5 L949.2,427.9 Z" fill="#6f737a"/><path d="M1074.2,426.7 L1074.8,427.9 L1076.0,428.5 L1074.8,429.1 L1074.2,430.3 L1073.6,429.1 L1072.4,428.5 L1073.6,427.9 Z" fill="#6f737a"/><path d="M1323.0,426.7 L1323.6,427.9 L1324.8,428.5 L1323.6,429.1 L1323.0,430.3 L1322.4,429.1 L1321.2,428.5 L1322.4,427.9 Z" fill="#6f737a"/><path d="M1400.7,426.7 L1401.3,427.9 L1402.5,428.5 L1401.3,429.1 L1400.7,430.3 L1400.1,429.1 L1398.9,428.5 L1400.1,427.9 Z" fill="#6f737a"/><path d="M1571.8,426.7 L1572.4,427.9 L1573.6,428.5 L1572.4,429.1 L1571.8,430.3 L1571.2,429.1 L1570.0,428.5 L1571.2,427.9 Z" fill="#6f737a"/><path d="M794.3,470.7 L794.9,471.9 L796.1,472.5 L794.9,473.1 L794.3,474.3 L793.7,473.1 L792.5,472.5 L793.7,471.9 Z" fill="#6f737a"/><path d="M809.8,470.7 L810.4,471.9 L811.6,472.5 L810.4,473.1 L809.8,474.3 L809.2,473.1 L808.0,472.5 L809.2,471.9 Z" fill="#6f737a"/><path d="M872.0,470.7 L872.6,471.9 L873.8,472.5 L872.6,473.1 L872.0,474.3 L871.4,473.1 L870.2,472.5 L871.4,471.9 Z" fill="#6f737a"/><path d="M996.4,470.7 L997.0,471.9 L998.2,472.5 L997.0,473.1 L996.4,474.3 L995.8,473.1 L994.6,472.5 L995.8,471.9 Z" fill="#6f737a"/><path d="M1027.5,470.7 L1028.1,471.9 L1029.3,472.5 L1028.1,473.1 L1027.5,474.3 L1026.9,473.1 L1025.7,472.5 L1026.9,471.9 Z" fill="#6f737a"/><path d="M794.3,514.7 L794.9,515.9 L796.1,516.5 L794.9,517.1 L794.3,518.3 L793.7,517.1 L792.5,516.5 L793.7,515.9 Z" fill="#6f737a"/><path d="M809.8,514.7 L810.4,515.9 L811.6,516.5 L810.4,517.1 L809.8,518.3 L809.2,517.1 L808.0,516.5 L809.2,515.9 Z" fill="#6f737a"/><path d="M825.4,514.7 L826.0,515.9 L827.2,516.5 L826.0,517.1 L825.4,518.3 L824.8,517.1 L823.6,516.5 L824.8,515.9 Z" fill="#6f737a"/><path d="M840.9,514.7 L841.5,515.9 L842.7,516.5 L841.5,517.1 L840.9,518.3 L840.3,517.1 L839.1,516.5 L840.3,515.9 Z" fill="#6f737a"/><path d="M794.3,558.7 L794.9,559.9 L796.1,560.5 L794.9,561.1 L794.3,562.3 L793.7,561.1 L792.5,560.5 L793.7,559.9 Z" fill="#6f737a"/><path d="M809.8,558.7 L810.4,559.9 L811.6,560.5 L810.4,561.1 L809.8,562.3 L809.2,561.1 L808.0,560.5 L809.2,559.9 Z" fill="#6f737a"/><path d="M825.4,558.7 L826.0,559.9 L827.2,560.5 L826.0,561.1 L825.4,562.3 L824.8,561.1 L823.6,560.5 L824.8,559.9 Z" fill="#6f737a"/><path d="M840.9,558.7 L841.5,559.9 L842.7,560.5 L841.5,561.1 L840.9,562.3 L840.3,561.1 L839.1,560.5 L840.3,559.9 Z" fill="#6f737a"/><path d="M794.3,602.7 L794.9,603.9 L796.1,604.5 L794.9,605.1 L794.3,606.3 L793.7,605.1 L792.5,604.5 L793.7,603.9 Z" fill="#6f737a"/><path d="M809.8,602.7 L810.4,603.9 L811.6,604.5 L810.4,605.1 L809.8,606.3 L809.2,605.1 L808.0,604.5 L809.2,603.9 Z" fill="#6f737a"/><path d="M794.3,690.7 L794.9,691.9 L796.1,692.5 L794.9,693.1 L794.3,694.3 L793.7,693.1 L792.5,692.5 L793.7,691.9 Z" fill="#6f737a"/><path d="M809.8,690.7 L810.4,691.9 L811.6,692.5 L810.4,693.1 L809.8,694.3 L809.2,693.1 L808.0,692.5 L809.2,691.9 Z" fill="#6f737a"/><path d="M918.7,690.7 L919.3,691.9 L920.5,692.5 L919.3,693.1 L918.7,694.3 L918.1,693.1 L916.9,692.5 L918.1,691.9 Z" fill="#6f737a"/><path d="M996.4,690.7 L997.0,691.9 L998.2,692.5 L997.0,693.1 L996.4,694.3 L995.8,693.1 L994.6,692.5 L995.8,691.9 Z" fill="#6f737a"/><path d="M1120.8,690.7 L1121.4,691.9 L1122.6,692.5 L1121.4,693.1 L1120.8,694.3 L1120.2,693.1 L1119.0,692.5 L1120.2,691.9 Z" fill="#6f737a"/><path d="M1276.3,690.7 L1276.9,691.9 L1278.1,692.5 L1276.9,693.1 L1276.3,694.3 L1275.7,693.1 L1274.5,692.5 L1275.7,691.9 Z" fill="#6f737a"/><path d="M1354.1,690.7 L1354.7,691.9 L1355.9,692.5 L1354.7,693.1 L1354.1,694.3 L1353.5,693.1 L1352.3,692.5 L1353.5,691.9 Z" fill="#6f737a"/><path d="M794.3,734.7 L794.9,735.9 L796.1,736.5 L794.9,737.1 L794.3,738.3 L793.7,737.1 L792.5,736.5 L793.7,735.9 Z" fill="#6f737a"/><path d="M809.8,734.7 L810.4,735.9 L811.6,736.5 L810.4,737.1 L809.8,738.3 L809.2,737.1 L808.0,736.5 L809.2,735.9 Z" fill="#6f737a"/><path d="M825.4,734.7 L826.0,735.9 L827.2,736.5 L826.0,737.1 L825.4,738.3 L824.8,737.1 L823.6,736.5 L824.8,735.9 Z" fill="#6f737a"/><path d="M840.9,734.7 L841.5,735.9 L842.7,736.5 L841.5,737.1 L840.9,738.3 L840.3,737.1 L839.1,736.5 L840.3,735.9 Z" fill="#6f737a"/><path d="M903.1,734.7 L903.7,735.9 L904.9,736.5 L903.7,737.1 L903.1,738.3 L902.5,737.1 L901.3,736.5 L902.5,735.9 Z" fill="#6f737a"/><path d="M1027.5,734.7 L1028.1,735.9 L1029.3,736.5 L1028.1,737.1 L1027.5,738.3 L1026.9,737.1 L1025.7,736.5 L1026.9,735.9 Z" fill="#6f737a"/><path d="M1058.6,734.7 L1059.2,735.9 L1060.4,736.5 L1059.2,737.1 L1058.6,738.3 L1058.0,737.1 L1056.8,736.5 L1058.0,735.9 Z" fill="#6f737a"/><path d="M1307.4,734.7 L1308.0,735.9 L1309.2,736.5 L1308.0,737.1 L1307.4,738.3 L1306.8,737.1 L1305.6,736.5 L1306.8,735.9 Z" fill="#6f737a"/><path d="M1354.1,734.7 L1354.7,735.9 L1355.9,736.5 L1354.7,737.1 L1354.1,738.3 L1353.5,737.1 L1352.3,736.5 L1353.5,735.9 Z" fill="#6f737a"/><path d="M794.3,778.7 L794.9,779.9 L796.1,780.5 L794.9,781.1 L794.3,782.3 L793.7,781.1 L792.5,780.5 L793.7,779.9 Z" fill="#6f737a"/><path d="M809.8,778.7 L810.4,779.9 L811.6,780.5 L810.4,781.1 L809.8,782.3 L809.2,781.1 L808.0,780.5 L809.2,779.9 Z" fill="#6f737a"/><path d="M825.4,778.7 L826.0,779.9 L827.2,780.5 L826.0,781.1 L825.4,782.3 L824.8,781.1 L823.6,780.5 L824.8,779.9 Z" fill="#6f737a"/><path d="M840.9,778.7 L841.5,779.9 L842.7,780.5 L841.5,781.1 L840.9,782.3 L840.3,781.1 L839.1,780.5 L840.3,779.9 Z" fill="#6f737a"/><path d="M856.5,778.7 L857.1,779.9 L858.3,780.5 L857.1,781.1 L856.5,782.3 L855.9,781.1 L854.7,780.5 L855.9,779.9 Z" fill="#6f737a"/><path d="M872.0,778.7 L872.6,779.9 L873.8,780.5 L872.6,781.1 L872.0,782.3 L871.4,781.1 L870.2,780.5 L871.4,779.9 Z" fill="#6f737a"/><path d="M794.3,822.7 L794.9,823.9 L796.1,824.5 L794.9,825.1 L794.3,826.3 L793.7,825.1 L792.5,824.5 L793.7,823.9 Z" fill="#6f737a"/><path d="M809.8,822.7 L810.4,823.9 L811.6,824.5 L810.4,825.1 L809.8,826.3 L809.2,825.1 L808.0,824.5 L809.2,823.9 Z" fill="#6f737a"/><path d="M825.4,822.7 L826.0,823.9 L827.2,824.5 L826.0,825.1 L825.4,826.3 L824.8,825.1 L823.6,824.5 L824.8,823.9 Z" fill="#6f737a"/><path d="M840.9,822.7 L841.5,823.9 L842.7,824.5 L841.5,825.1 L840.9,826.3 L840.3,825.1 L839.1,824.5 L840.3,823.9 Z" fill="#6f737a"/><path d="M794.3,866.7 L794.9,867.9 L796.1,868.5 L794.9,869.1 L794.3,870.3 L793.7,869.1 L792.5,868.5 L793.7,867.9 Z" fill="#6f737a"/><path d="M809.8,866.7 L810.4,867.9 L811.6,868.5 L810.4,869.1 L809.8,870.3 L809.2,869.1 L808.0,868.5 L809.2,867.9 Z" fill="#6f737a"/><path d="M825.4,1042.7 L826.0,1043.9 L827.2,1044.5 L826.0,1045.1 L825.4,1046.3 L824.8,1045.1 L823.6,1044.5 L824.8,1043.9 Z" fill="#6f737a"/><path d="M903.1,1042.7 L903.7,1043.9 L904.9,1044.5 L903.7,1045.1 L903.1,1046.3 L902.5,1045.1 L901.3,1044.5 L902.5,1043.9 Z" fill="#6f737a"/><path d="M949.8,1042.7 L950.4,1043.9 L951.6,1044.5 L950.4,1045.1 L949.8,1046.3 L949.2,1045.1 L948.0,1044.5 L949.2,1043.9 Z" fill="#6f737a"/><path d="M980.9,1042.7 L981.5,1043.9 L982.7,1044.5 L981.5,1045.1 L980.9,1046.3 L980.3,1045.1 L979.1,1044.5 L980.3,1043.9 Z" fill="#6f737a"/><path d="M1074.2,1042.7 L1074.8,1043.9 L1076.0,1044.5 L1074.8,1045.1 L1074.2,1046.3 L1073.6,1045.1 L1072.4,1044.5 L1073.6,1043.9 Z" fill="#6f737a"/><path d="M1151.9,1042.7 L1152.5,1043.9 L1153.7,1044.5 L1152.5,1045.1 L1151.9,1046.3 L1151.3,1045.1 L1150.1,1044.5 L1151.3,1043.9 Z" fill="#6f737a"/><path d="M1245.2,1042.7 L1245.8,1043.9 L1247.0,1044.5 L1245.8,1045.1 L1245.2,1046.3 L1244.6,1045.1 L1243.4,1044.5 L1244.6,1043.9 Z" fill="#6f737a"/><path d="M1307.4,1042.7 L1308.0,1043.9 L1309.2,1044.5 L1308.0,1045.1 L1307.4,1046.3 L1306.8,1045.1 L1305.6,1044.5 L1306.8,1043.9 Z" fill="#6f737a"/><path d="M1338.5,1042.7 L1339.1,1043.9 L1340.3,1044.5 L1339.1,1045.1 L1338.5,1046.3 L1337.9,1045.1 L1336.7,1044.5 L1337.9,1043.9 Z" fill="#6f737a"/><path d="M1447.4,1042.7 L1448.0,1043.9 L1449.2,1044.5 L1448.0,1045.1 L1447.4,1046.3 L1446.8,1045.1 L1445.6,1044.5 L1446.8,1043.9 Z" fill="#6f737a"/><path d="M1665.1,1042.7 L1665.7,1043.9 L1666.9,1044.5 L1665.7,1045.1 L1665.1,1046.3 L1664.5,1045.1 L1663.3,1044.5 L1664.5,1043.9 Z" fill="#6f737a"/><path d="M1742.8,1042.7 L1743.4,1043.9 L1744.6,1044.5 L1743.4,1045.1 L1742.8,1046.3 L1742.2,1045.1 L1741.0,1044.5 L1742.2,1043.9 Z" fill="#6f737a"/><polyline points="879.3,485.0 884.3,489.7 889.3,485.0 894.3,489.7 899.3,485.0 904.3,489.7 909.3,485.0 914.3,489.7 919.3,485.0 924.3,489.7 929.3,485.0 934.3,489.7 939.3,485.0 944.3,489.7 949.3,485.0 954.3,489.7 959.3,485.0 964.3,489.7 969.3,485.0 974.3,489.7 979.3,485.0 984.3,489.7 989.3,485.0" fill="none" stroke="#dd6470" stroke-width="2"/><polyline points="910.4,749.0 915.4,753.7 920.4,749.0 925.4,753.7 930.4,749.0 935.4,753.7 940.4,749.0 945.4,753.7 950.4,749.0 955.4,753.7 960.4,749.0 965.4,753.7 970.4,749.0 975.4,753.7 980.4,749.0 985.4,753.7 990.4,749.0 995.4,753.7 1000.4,749.0 1005.4,753.7 1010.4,749.0 1015.4,753.7 1020.4,749.0" fill="none" stroke="#dd6470" stroke-width="2"/><polyline points="1254.0,441.0 1259.0,446.0 1264.0,441.0 1269.0,446.0 1274.0,441.0 1279.0,446.0 1284.0,441.0 1289.0,446.0 1294.0,441.0 1299.0,446.0 1304.0,441.0" fill="none" stroke="#dd6470" stroke-width="2"/><circle cx="734.7" cy="472" r="9.6" fill="#25324d" stroke="#6a96f5" stroke-width="2.2"/><circle cx="734.7" cy="472" r="5" fill="none" stroke="#6a96f5" stroke-width="2.2"/><path d="M741.7,456 H751.7 V470 H741.7 Z" fill="#1e1f22"/><path d="M746.9000000000001,473.8 V458.5 M742.2,463.5 L746.9000000000001,458.5 L751.7,463.5" fill="none" stroke="#e06c64" stroke-width="2.2" stroke-linecap="round" stroke-linejoin="round"/><circle cx="734.7" cy="736.0" r="9.6" fill="#25324d" stroke="#6a96f5" stroke-width="2.2"/><circle cx="734.7" cy="736.0" r="5" fill="none" stroke="#6a96f5" stroke-width="2.2"/><path d="M741.7,720.0 H751.7 V734.0 H741.7 Z" fill="#1e1f22"/><path d="M746.9000000000001,737.8 V722.5 M742.2,727.5 L746.9000000000001,722.5 L751.7,727.5" fill="none" stroke="#e06c64" stroke-width="2.2" stroke-linecap="round" stroke-linejoin="round"/><g fill="none" stroke="#6f737a" stroke-width="2"><path d="M1433,288 Q1448,271.5 1463,288 Q1448,304.5 1433,288 Z" stroke-linejoin="round"/><circle cx="1448" cy="288" r="4.8"/></g><circle cx="1530" cy="288" r="11.9" fill="#cc5560"/><path d="M1530,281 V290" stroke="#1e1f22" stroke-width="3" stroke-linecap="round"/><circle cx="1530" cy="294.5" r="1.7" fill="#1e1f22"/><path d="M1589.9,277.5 Q1587.5,276.5 1586,279 L1578.5,293.5 Q1577.5,297 1581,297 H1598.8 Q1602.3,297 1601.2,293.5 L1593.8,279 Q1592.3,276.5 1589.9,277.5 Z" fill="#c9a45a"/><path d="M1589.9,282.5 V290" stroke="#1e1f22" stroke-width="2.8" stroke-linecap="round"/><circle cx="1589.9" cy="294" r="1.5" fill="#1e1f22"/><path d="M1635.5,285.5 L1641.5,292 L1655.5,278.5" fill="none" stroke="#6aa46a" stroke-width="3.2" stroke-linecap="round" stroke-linejoin="round"/><polyline points="1634.5,301.5 1638,297.5 1641.5,301.5 1645,297.5 1648.5,301.5 1652,297.5 1655.5,300" fill="none" stroke="#6aa46a" stroke-width="1.8"/><path d="M1700.45,292.0 L1708.2,284.0 L1715.95,292.0" fill="none" stroke="#ced0d6" stroke-width="2" stroke-linecap="round" stroke-linejoin="round"/><path d="M1742.25,284.0 L1750,292.0 L1757.75,284.0" fill="none" stroke="#ced0d6" stroke-width="2" stroke-linecap="round" stroke-linejoin="round"/><g fill="none" stroke="#ced0d6" stroke-width="2" stroke-linejoin="round" stroke-linecap="round"><path d="M1795.7,183.5 H1820.3 Q1816.5,179.5 1816.5,174.5 V171 Q1816.5,161 1808,161 Q1799.5,161 1799.5,171 V174.5 Q1799.5,179.5 1795.7,183.5 Z"/></g><path d="M1804.5,186.0 Q1808,190.0 1811.5,186.0 Z" fill="#ced0d6"/><g fill="none" stroke="#ced0d6" stroke-width="2.1" stroke-linecap="round"><path d="M1798.6,228.4 Q1806,225.6 1813,228.3 Q1819.3,231.2 1819,237.2 Q1818.3,243.3 1810.8,243.9 Q1803.6,244.2 1802.9,239.6 Q1802.6,236.2 1806.5,236.1 Q1809.2,236.3 1809.6,238.4"/><path d="M1817.3,247.3 Q1811,250.2 1804,248.6 Q1797.1,246.5 1797,239.8 Q1797.4,232.5 1806,232.3 Q1812.7,232.5 1813.2,236.6 Q1813.2,239.6 1810.2,239.8"/></g><g fill="none" stroke="#ced0d6" stroke-width="2"><ellipse cx="1808" cy="293" rx="11.5" ry="4.5"/><path d="M1796.5,293 V310.5 Q1796.5,315 1808,315 Q1819.5,315 1819.5,310.5 V293"/><path d="M1796.5,299.2 Q1796.5,303.7 1808,303.7 Q1819.5,303.7 1819.5,299.2"/><path d="M1796.5,305 Q1796.5,309.5 1808,309.5 Q1819.5,309.5 1819.5,305"/></g><g fill="none" stroke="#ced0d6" stroke-width="2" stroke-linejoin="round"><path d="M1805,352.8 H1811 Q1815,352.8 1815,356.8 V359 H1818 Q1821.5,359 1821.5,363 V368 Q1821.5,372 1817.5,372 H1815 V375.3 Q1815,379.3 1811,379.3 H1805 Q1801,379.3 1801,375.3 V372.5 H1798.3 Q1794.5,372.5 1794.5,368.5 V363.5 Q1794.5,359.5 1798.3,359.5 H1801 V356.8 Q1801,352.8 1805,352.8 Z"/><path d="M1815,359 V362.2 Q1815,365.8 1811.4,365.8 H1805 Q1801.2,365.8 1801.2,369.6 V372.5"/></g><circle cx="1807.1" cy="358.8" r="1.6" fill="#ced0d6"/><circle cx="1808.6" cy="373.5" r="1.6" fill="#ced0d6"/><path d="M1795.8,416 V445 M1820.3,416 V445" stroke="#ced0d6" stroke-width="2.2" stroke-linecap="round"/><g fill="none" stroke="#ced0d6" stroke-width="2.1" stroke-linecap="round" stroke-linejoin="round"><path d="M1800.6,423.25 H1812.3 M1808.3,419.25 L1812.3,423.25 L1808.3,427.25"/><path d="M1815.8,438.04 H1804.1 M1808.1,434.04 L1804.1,438.04 L1808.1,442.04"/></g><g fill="none" stroke="#dfe1e5" stroke-width="2" stroke-linecap="round"><path d="M954.2,1124.4 Q961.5,1121 970.8,1125"/><path d="M967,1128.8 Q955,1125.5 952.8,1134.5 Q952.5,1139 955.8,1140.8"/><path d="M959,1137.5 Q959.5,1133.5 963,1133"/><path d="M974.3,1128.3 Q977.2,1133 973.5,1137 Q969.5,1140 962.8,1139.5"/><path d="M958.7,1143.4 Q966,1146.6 973.5,1143.4"/><path d="M951.4,1146.1 L976.7,1121.4"/></g><path d="M1015,1119 V1145.5 M1039.5,1119 V1145.5" stroke="#6a96f5" stroke-width="2.2" stroke-linecap="round"/><g fill="none" stroke="#dfe1e5" stroke-width="2.1" stroke-linecap="round" stroke-linejoin="round"><path d="M1019.8,1125.625 H1031.5 M1027.5,1121.625 L1031.5,1125.625 L1027.5,1129.625"/><path d="M1035,1139.14 H1023.3 M1027.3,1135.14 L1023.3,1139.14 L1027.3,1143.14"/></g><path d="M1158,1121.5 H1155 V1142.5 H1158 M1178,1121.5 H1181 V1142.5 H1178" fill="none" stroke="#6aa46a" stroke-width="2.2" stroke-linecap="round" stroke-linejoin="round"/><path d="M1158,1121.5 H1155 V1142.5 H1158 M1178,1121.5 H1181 V1142.5 H1178" fill="none" stroke="#6aa46a" stroke-width="2.2" stroke-linecap="round" stroke-linejoin="round"/><path d="M1162.5,1126 H1173.5 M1168,1126 V1138.5" stroke="#dfe1e5" stroke-width="2.2" stroke-linecap="round"/><g fill="none" stroke="#dfe1e5" stroke-width="2" stroke-linejoin="round" stroke-linecap="round"><rect x="1523" y="1131" width="17.5" height="12.5" rx="2.5"/><path d="M1533.5,1131 V1127 Q1533.5,1121 1540.5,1121 Q1547.5,1121 1547.5,1127 V1129"/><path d="M1531.8,1135 V1139"/></g><g fill="none" stroke="#dfe1e5" stroke-width="2" stroke-linejoin="round" stroke-linecap="round"><path d="M1583.7,1144 H1608.3 Q1604.5,1140 1604.5,1135 V1131.5 Q1604.5,1121.5 1596,1121.5 Q1587.5,1121.5 1587.5,1131.5 V1135 Q1587.5,1140 1583.7,1144 Z"/></g><path d="M1592.5,1146.5 Q1596,1150.5 1599.5,1146.5 Z" fill="#dfe1e5"/><path d="M1762.9,466.1 L1682.2,489.5 L1701.9,511.5 L1613,592.9 L1623,603.7 L1712.2,523 L1732.6,544.5 Z" fill="#7b1f12" stroke="#7b1f12" stroke-width="1" stroke-linejoin="miter" style="filter:drop-shadow(0 1px 1.5px rgba(0,0,0,0.5))"/></svg>
<div class="a" style="left:1773px;top:459px;width:94px;height:68px;border-radius:8px;background:#393b40;box-shadow:0 0 0 1px #1b1c1f"></div>
<div class="t" style="left:1797.50px;top:478.05px;font-size:27px;color:#dfe1e5;font-family:'Liberation Sans',sans-serif;letter-spacing:0.3px">bsp</div>
</body></html>
